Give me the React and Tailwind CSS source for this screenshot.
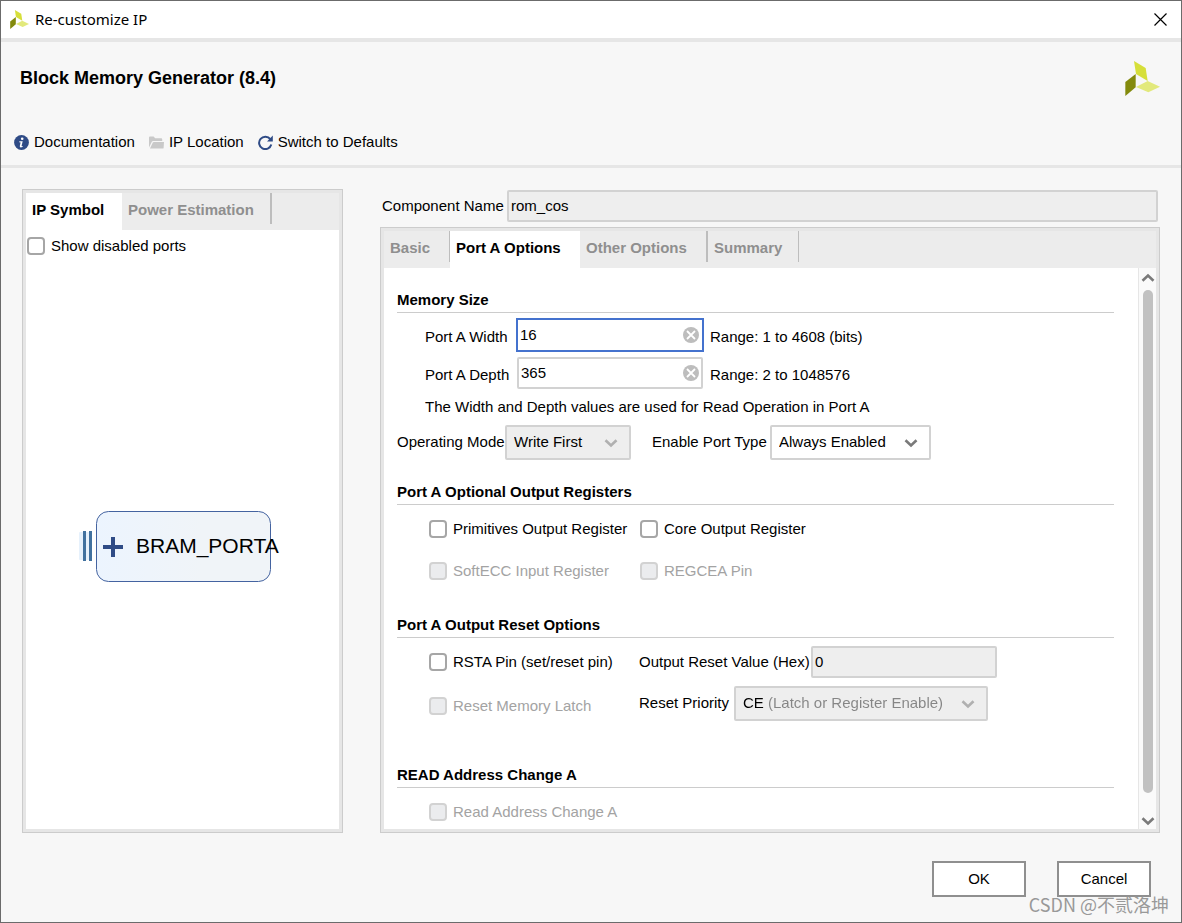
import { useState } from 'react';
import clsx from 'clsx';

const Logo = ({ className }) => (
  <svg viewBox="257 183 105 105" className={className} aria-hidden="true">
    <polygon points="284,183 319,204 325,243 290,222" fill="#d6df3a" />
    <polygon points="258,246 289,222 289,262 258,288" fill="#838a0c" />
    <polygon points="290,261 325,243 362,260 327,277" fill="#e2e97c" />
  </svg>
);

const InfoIcon = () => (
  <svg viewBox="0 0 15 15" className="size-[15px]" aria-hidden="true">
    <circle cx="7.5" cy="7.5" r="7.4" fill="#2f4b86" />
    <circle cx="8.2" cy="3.7" r="1.3" fill="#fff" />
    <path d="M5.4 6.2h3.3l-1.1 4.6q-.1.7 1.2.3l-.2.9q-3.1 1.200-2.800-.9l.8-3.700-1.400-.2z" fill="#fff" />
  </svg>
);

const FolderIcon = () => (
  <svg viewBox="0 0 15 15" className="size-[15px]" aria-hidden="true">
    <path d="M0 12.500V2.500q0-1 1-1h3.600l1.600 1.700h6q1 0 1 1V6H4.200q-1 0-1.400.8z" fill="#c9c9c9" />
    <path d="M1 13.600l2.800-6q.3-.6 1-.6H15l-.4 6q0 .6-.8.6z" fill="#c9c9c9" />
  </svg>
);

const RefreshIcon = () => (
  <svg viewBox="0 0 15 15" className="size-[15px]" aria-hidden="true">
    <path d="M12.300 4.200A6.200 6.200 0 1 0 13.300 9.500" fill="none" stroke="#2f4b86" strokeWidth="2" />
    <path d="M14.800.6v5.800H9z" fill="#2f4b86" />
  </svg>
);

const Chevron = ({ className, up }) => (
  <svg viewBox="0 0 14 10" className={clsx('h-[10px] w-[14px]', className)} fill="none" stroke="currentColor" strokeWidth="2.6" aria-hidden="true">
    <path d={up ? 'M1.500 7.800L7 2.500l5.500 5.300' : 'M1.500 2.200L7 7.500l5.500-5.300'} />
  </svg>
);

const Tab = ({ active, className, children }) => (
  <button
    type="button"
    role="tab"
    aria-selected={!!active}
    className={clsx(
      'flex shrink-0 items-center pl-1.5 text-left font-bold',
      active ? 'h-[37px] bg-white pb-[3px] text-black' : 'h-[31px] border-[#bdbdbd] pt-[3px] text-[#8f8f8f]',
      className
    )}
  >
    {children}
  </button>
);

const Check = ({ label, disabled }) => (
  <label className={clsx('flex h-5 items-center gap-1.5', disabled && 'text-[#a3a3a3]')}>
    <input
      type="checkbox"
      disabled={disabled}
      className={clsx(
        'size-[18px] shrink-0 appearance-none rounded-[4px] border-2 checked:bg-[#2f4b86]',
        disabled ? 'border-[#d2d2d2] bg-[#ebecee]' : 'border-[#a6a6a6] bg-white'
      )}
    />
    {label}
  </label>
);

const NumberField = ({ id, label, range, value, onChange, focused, onFocus }) => (
  <div className="flex items-center pl-7">
    <label htmlFor={id} className="w-[91px] pt-1">{label}</label>
    <div className="h-[34px] w-[188px]">
      <div
        className={clsx(
          'flex items-center border-2',
          focused ? 'h-[34px] border-[#4472ce] pr-[3px]' : 'm-px h-8 rounded-[2px] border-[#d2d2d2] pr-0.5'
        )}
      >
        <input
          id={id}
          type="text"
          value={value}
          onChange={(e) => onChange(e.target.value)}
          onFocus={onFocus}
          className="min-w-0 flex-1 bg-transparent pl-0.5 outline-none"
        />
        <button type="button" aria-label={`Clear ${label}`} onClick={() => onChange('')}>
          <svg viewBox="0 0 16 16" className="size-4">
            <circle cx="8" cy="8" r="8" fill="#bdbdbd" />
            <path d="M4 4l8 8m0-8l-8 8" stroke="#fff" strokeWidth="1.800" />
          </svg>
        </button>
      </div>
    </div>
    <span className="pt-1 pl-1.5">{range}</span>
  </div>
);

const Select = ({ id, options, disabled, className, textClass }) => (
  <div
    className={clsx(
      'relative h-[35px] rounded-[2px] border-2 border-[#d2d2d2]',
      disabled ? 'bg-[#eeeeee] text-[#b0b0b0]' : 'bg-white text-[#7a7a7a]',
      className
    )}
  >
    <select
      id={id}
      disabled={disabled}
      className={clsx('size-full appearance-none pb-0.5 pl-[7px] opacity-100 outline-none', textClass || 'text-black')}
    >
      {options.map((o) => (
        <option key={o}>{o}</option>
      ))}
    </select>
    <Chevron className="pointer-events-none absolute top-[11px] right-[11px]" />
  </div>
);

const Heading = ({ children }) => (
  <h2 className="h-[23px] border-b border-[#cccccc] font-bold">{children}</h2>
);

const PortSymbol = () => (
  <svg width="209" height="71" viewBox="0 0 209 71" className="overflow-visible">
    <defs>
      <linearGradient id="port" x1="0" y1="0" x2="1" y2="0">
        <stop offset="0" stopColor="#ecf4fe" />
        <stop offset="0.6" stopColor="#f0f4f8" />
      </linearGradient>
    </defs>
    <rect x="0" y="21" width="13" height="28" rx="1" fill="#e6f1fc" />
    <rect x="4" y="20" width="3" height="30" fill="#41719f" />
    <rect x="10" y="20" width="3" height="30" fill="#41719f" />
    <rect x="17.5" y="0.5" width="174" height="70" rx="12" fill="url(#port)" stroke="#4463a0" />
    <path d="M24 36h20M34 26v20" stroke="#2f4b86" strokeWidth="4" />
    <text x="57" y="42" fontSize="21">BRAM_PORTA</text>
  </svg>
);

const TOOLBAR = [
  { label: 'Documentation', Icon: InfoIcon },
  { label: 'IP Location', Icon: FolderIcon },
  { label: 'Switch to Defaults', Icon: RefreshIcon },
];

const App = () => {
  const [width, setWidth] = useState('16');
  const [depth, setDepth] = useState('365');
  const [field, setField] = useState('width');

  return (
    <div className="relative flex min-h-screen flex-col border border-[#6b6b6b] bg-[#f7f7f7] font-['Liberation_Sans',Arial,sans-serif] text-[15px] leading-5 text-black">
      {/* Title bar */}
      <div className="flex h-[41px] items-center border-b-4 border-[#e6e6e6] bg-white pr-3.5 pl-[9px]">
        <Logo className="size-[19px]" />
        <span className="pb-0.5 pl-1.5 font-['Noto_Sans',sans-serif]">Re-customize IP</span>
        <button type="button" aria-label="Close" className="ml-auto">
          <svg viewBox="0 0 13 13" className="size-[13px]" stroke="#000" strokeWidth="1.200">
            <path d="M.5.5l12 12m0-12l-12 12" />
          </svg>
        </button>
      </div>

      {/* Header */}
      <header className="border-b-[3px] border-[#e6e6e6] pt-[19px] pb-[13px]">
        <div className="flex items-center justify-between pr-[21px] pl-[19px]">
          <h1 className="pb-0.5 text-[18px] font-bold">Block Memory Generator (8.4)</h1>
          <Logo className="size-[35px]" />
        </div>
        <div className="mt-9 flex gap-3.5 pl-[13px]">
          {TOOLBAR.map(({ label, Icon }) => (
            <button key={label} type="button" className="flex items-center gap-[5px]">
              <Icon />
              {label}
            </button>
          ))}
        </div>
      </header>

      <main className="flex flex-1 gap-[37px] px-[21px] pt-[21px]">
        {/* Symbol panel */}
        <section className="flex w-[321px] shrink-0 flex-col border border-[#cccccc] bg-[#e6e6e6] p-[3px]">
          <div role="tablist" className="flex h-[37px] bg-[#ececec]">
            <Tab active className="w-24">IP Symbol</Tab>
            <Tab className="w-[150px] border-r-2">Power Estimation</Tab>
          </div>
          <div className="flex flex-1 flex-col bg-white pt-1.5 pl-px">
            <Check label="Show disabled ports" />
            <div className="flex flex-1 items-center justify-center pt-2">
              <PortSymbol />
            </div>
          </div>
        </section>

        {/* Options */}
        <section className="flex min-w-0 flex-1 flex-col">
          <div className="mt-px mr-0.5 flex items-center pl-0.5">
            <label htmlFor="component" className="w-[125px]">Component Name</label>
            <input
              id="component"
              type="text"
              disabled
              defaultValue="rom_cos"
              className="h-8 min-w-0 flex-1 rounded-[2px] border-2 border-[#d2d2d2] bg-[#eeeeee] pb-0.5 pl-0.5"
            />
          </div>

          <div className="mt-[5px] flex flex-1 flex-col border border-[#cccccc] bg-[#e6e6e6] p-[3px]">
            <div role="tablist" className="flex h-[37px] bg-[#ececec]">
              <Tab className="w-[66px] border-r">Basic</Tab>
              <Tab active className="w-[130px]">Port A Options</Tab>
              <Tab className="w-32 border-r-2">Other Options</Tab>
              <Tab className="w-[91px] border-r">Summary</Tab>
            </div>

            <div className="flex flex-1 bg-white">
              <div className="flex-1 pt-[22px] pr-6 pb-[7px] pl-[13px]">
                <Heading>Memory Size</Heading>
                <div className="mt-[5px] flex flex-col gap-1">
                  <NumberField
                    id="width"
                    label="Port A Width"
                    range="Range: 1 to 4608 (bits)"
                    value={width}
                    onChange={setWidth}
                    focused={field === 'width'}
                    onFocus={() => setField('width')}
                  />
                  <NumberField
                    id="depth"
                    label="Port A Depth"
                    range="Range: 2 to 1048576"
                    value={depth}
                    onChange={setDepth}
                    focused={field === 'depth'}
                    onFocus={() => setField('depth')}
                  />
                </div>
                <p className="mt-[7px] pl-7">The Width and Depth values are used for Read Operation in Port A</p>
                <div className="mt-2 flex items-center">
                  <label htmlFor="mode" className="w-[108px] pb-0.5">Operating Mode</label>
                  <Select id="mode" disabled options={['Write First', 'Read First', 'No Change']} className="w-[126px]" />
                  <label htmlFor="enable" className="ml-[21px] w-[118px] pb-0.5">Enable Port Type</label>
                  <Select id="enable" options={['Always Enabled', 'Use ENA Pin']} className="w-[161px]" />
                </div>

                <div className="mt-[22px]">
                  <Heading>Port A Optional Output Registers</Heading>
                  <div className="mt-3.5 grid grid-cols-[211px_1fr] gap-y-[22px] pl-8">
                    <Check label="Primitives Output Register" />
                    <Check label="Core Output Register" />
                    <Check label="SoftECC Input Register" disabled />
                    <Check label="REGCEA Pin" disabled />
                  </div>
                </div>

                <div className="mt-[34px]">
                  <Heading>Port A Output Reset Options</Heading>
                  <div className="flex pt-2 pl-8">
                    <div className="flex w-[210px] flex-col gap-6 pt-1.5">
                      <Check label="RSTA Pin (set/reset pin)" />
                      <Check label="Reset Memory Latch" disabled />
                    </div>
                    <div className="flex flex-col gap-2">
                      <div className="flex items-center">
                        <label htmlFor="reset" className="w-[172px]">Output Reset Value (Hex)</label>
                        <input
                          id="reset"
                          type="text"
                          disabled
                          defaultValue="0"
                          className="h-8 w-[186px] rounded-[2px] border-2 border-[#d2d2d2] bg-[#eeeeee] pb-0.5 pl-0.5"
                        />
                      </div>
                      <div className="flex items-center">
                        <label htmlFor="priority" className="w-[95px] pb-0.5">Reset Priority</label>
                        <Select
                          id="priority"
                          disabled
                          options={['CE (Latch or Register Enable)', 'SR (Set Reset)']}
                          className="w-[254px]"
                          textClass="bg-linear-to-r from-black from-[30px] to-[#858585] to-[30px] bg-clip-text text-transparent"
                        />
                      </div>
                    </div>
                  </div>
                </div>

                <div className="mt-11">
                  <Heading>READ Address Change A</Heading>
                  <div className="mt-3.5 pl-8">
                    <Check label="Read Address Change A" disabled />
                  </div>
                </div>
              </div>

              {/* Scrollbar */}
              <div className="flex w-[18px] flex-col items-center border-l border-[#e6e6e6] bg-[#fafafa] pt-[5px] pb-[3px] text-[#7a7a7a]">
                <Chevron up />
                <div className="mt-[7px] w-2.5 flex-1 rounded-full bg-[#c1c1c1]" />
                <Chevron className="mt-[23px]" />
              </div>
            </div>
          </div>
        </section>
      </main>

      <footer className="flex justify-end gap-[31px] pt-7 pr-[30px] pb-[25px]">
        <button type="button" className="h-9 w-[94px] border-2 border-[#8f8f8f] bg-white">OK</button>
        <button type="button" className="h-9 w-[94px] border-2 border-[#8f8f8f] bg-white">Cancel</button>
      </footer>

      <span className="pointer-events-none absolute right-3 bottom-1.5 font-['Noto_Sans_CJK_SC',sans-serif] text-[18px] leading-6 text-[#999999]">
        CSDN @不贰洛坤
      </span>
    </div>
  );
};

export default App;
